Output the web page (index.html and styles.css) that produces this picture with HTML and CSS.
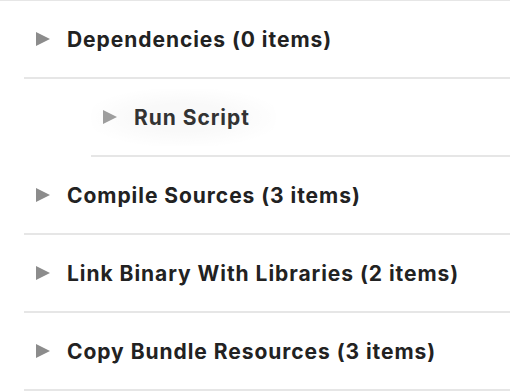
FILE: index.html
```html
<!DOCTYPE html>
<html>
<head>
<meta charset="utf-8">
<link rel="stylesheet" href="styles.css">
</head>
<body>
<div class="phases">
  <div class="phase">
    <span class="tri"></span><span class="label">Dependencies (0 items)</span>
  </div>
  <div class="phase phase-drag">
    <div class="ghost"><span class="tri"></span><span class="label">Run Script</span></div>
  </div>
  <div class="phase">
    <span class="tri"></span><span class="label">Compile Sources (3 items)</span>
  </div>
  <div class="phase">
    <span class="tri"></span><span class="label">Link Binary With Libraries (2 items)</span>
  </div>
  <div class="phase">
    <span class="tri"></span><span class="label">Copy Bundle Resources (3 items)</span>
  </div>
</div>
</body>
</html>
```
FILE: styles.css
```css
html, body {
  margin: 0;
  padding: 0;
  background: #ffffff;
}
body {
  font-family: Inter, "Liberation Sans", sans-serif;
}
.phases {
  border-top: 1px solid #e6e6e6;
}
.phase {
  margin-left: 24px;
  height: 76px;
  border-bottom: 2px solid #e6e6e6;
  display: flex;
  align-items: center;
  padding-left: 12px;
}
.phase-drag {
  margin-left: 91px;
  padding-left: 0;
}
.ghost {
  display: flex;
  align-items: center;
  padding: 16px 26px 16px 12px;
  border-radius: 40px;
  background: radial-gradient(ellipse at center, rgba(0,0,0,0.025) 35%, rgba(0,0,0,0) 78%);
}
.tri {
  width: 0;
  height: 0;
  border-top: 7px solid transparent;
  border-bottom: 7px solid transparent;
  border-left: 14px solid #8c8c8c;
  margin-right: 17px;
  flex: none;
}
.label {
  font-size: 21px;
  font-weight: 700;
  color: #222222;
  letter-spacing: 0.95px;
}
.ghost .tri {
  border-left-color: #9e9e9e;
}
.ghost .label {
  color: #333333;
}
```
